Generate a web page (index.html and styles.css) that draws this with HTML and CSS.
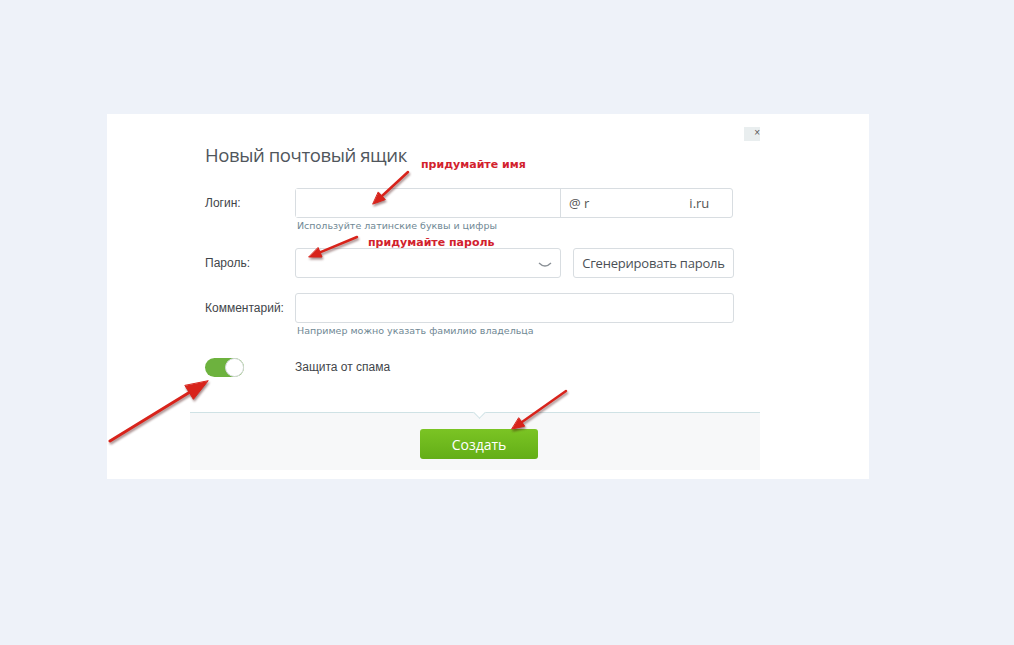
FILE: index.html
```html
<!DOCTYPE html>
<html lang="ru">
<head>
    <meta charset="UTF-8">
    <title>Новый почтовый ящик</title>
    <link rel="stylesheet" href="styles.css">
</head>
<body>
    <div class="panel">
        <div class="dialog">
            <div class="dialog-head">
                <h2>Новый почтовый ящик</h2>
                <span class="close">&times;</span>
            </div>

            <div class="form">
                <div class="row">
                    <label>Логин:</label>
                    <div class="field login">
                        <div class="input"></div>
                        <div class="domain">@ r<span class="domain-end">i.ru</span></div>
                    </div>
                </div>
                <p class="hint">Используйте латинские буквы и цифры</p>

                <div class="row row-pass">
                    <label>Пароль:</label>
                    <div class="input pass">
                        <svg class="eye" width="14" height="6" viewBox="0 0 14 6">
                            <path d="M1 1 Q7 7 13 1" fill="none" stroke="#8a9096" stroke-width="1.3"/>
                        </svg>
                    </div>
                    <button class="btn-gen">Сгенерировать пароль</button>
                </div>

                <div class="row row-comment">
                    <label>Комментарий:</label>
                    <div class="input comment"></div>
                </div>
                <p class="hint">Например можно указать фамилию владельца</p>

                <div class="row row-spam">
                    <label><span class="toggle"><span class="knob"></span></span></label>
                    <span class="spam-text">Защита от спама</span>
                </div>
            </div>

            <div class="dialog-foot">
                <span class="notch"></span>
                <button class="btn-create">Создать</button>
            </div>
        </div>
    </div>

    <!-- annotations drawn on top of the screenshot -->
    <span class="note note-name">придумайте имя</span>
    <span class="note note-pass">придумайте пароль</span>
    <svg class="arrows" width="1014" height="645" viewBox="0 0 1014 645">
        <g fill="#d8231b" stroke="#d8231b" stroke-linecap="round">
            <line x1="408" y1="172" x2="382" y2="196" stroke-width="2.5"/>
            <polygon points="373,204 385.3,199.6 378.5,192.2" stroke-width="1"/>
            <line x1="357" y1="237" x2="320" y2="252.4" stroke-width="2.5"/>
            <polygon points="309,257 322,257 318.2,247.8" stroke-width="1"/>
            <line x1="566" y1="391" x2="522" y2="422" stroke-width="2.5"/>
            <polygon points="512,429 524.7,426.2 518.9,418" stroke-width="1"/>
            <line x1="110" y1="441" x2="190" y2="392" stroke-width="3"/>
            <polygon points="208,381 193.4,399.3 185,385.7" stroke-width="1"/>
        </g>
    </svg>
</body>
</html>
```

FILE: styles.css
```css
:root {
    --page-bg: #eef2f9;
    --text: #4d5358;
    --hint: #6f8894;
    --border: #d8dde1;
    --green: #6cb91f;
    --red: #d2212d;
}

body {
    margin: 0;
    background-color: var(--page-bg);
    font-family: 'Liberation Sans', Arial, sans-serif;
    color: var(--text);
    width: 1014px;
    height: 645px;
    position: relative;
    overflow: hidden;
}

.panel {
    margin: 114px 0 0 107px;
    width: 762px;
    background: #ffffff;
    padding: 0 0 9px 83px;
    box-sizing: border-box;
}

.dialog {
    width: 570px;
}

.dialog-head {
    display: flex;
    justify-content: space-between;
    align-items: flex-start;
    padding: 13px 0 0 15px;
}

.dialog-head h2 {
    margin: 16px 0 0;
    font-family: 'Open Sans', Arial, sans-serif;
    font-weight: 400;
    font-size: 18.5px;
    line-height: 24px;
    color: #50565c;
    letter-spacing: -0.4px;
}

.close {
    width: 16px;
    height: 14px;
    background: #e9eeef;
    font-size: 10px;
    line-height: 12px;
    text-align: right;
    color: #555;
    box-sizing: border-box;
}

.form {
    padding: 21px 0 0 15px;
}

.row {
    display: flex;
    align-items: center;
}

.row label {
    width: 90px;
    flex-shrink: 0;
    font-size: 12px;
    color: #3f454a;
}

.input {
    height: 30px;
    border: 1px solid var(--border);
    border-radius: 3px;
    box-sizing: border-box;
    background: #fff;
}

.field.login {
    display: flex;
    width: 438px;
    height: 30px;
    border: 1px solid var(--border);
    border-radius: 3px;
    box-sizing: border-box;
}

.field.login .input {
    width: 265px;
    height: 28px;
    border: none;
    border-right: 1px solid var(--border);
    border-radius: 0;
}

.domain {
    flex: 1;
    display: flex;
    align-items: center;
    padding-left: 8px;
    font-family: 'Open Sans', Arial, sans-serif;
    font-size: 13px;
    color: #555;
}

.domain-end {
    margin-left: 100px;
}

.hint {
    margin: 2px 0 0 92px;
    font-family: 'DejaVu Sans', Verdana, sans-serif;
    font-size: 9.5px;
    line-height: 12px;
    color: var(--hint);
}

.row-pass {
    margin-top: 16px;
}

.input.pass {
    width: 266px;
    position: relative;
}

.eye {
    position: absolute;
    right: 8px;
    top: 13px;
}

.btn-gen {
    margin-left: 12px;
    width: 161px;
    height: 30px;
    border: 1px solid var(--border);
    border-radius: 3px;
    background: #fff;
    font-family: 'Open Sans', Arial, sans-serif;
    font-size: 13px;
    color: #4a5056;
    padding: 0;
    letter-spacing: -0.2px;
}

.row-comment {
    margin-top: 15px;
}

.input.comment {
    width: 439px;
}

.row-spam {
    margin-top: 20px;
    height: 20px;
}

.toggle {
    display: block;
    width: 39px;
    height: 19px;
    border-radius: 10px;
    background: #6db23e;
    position: relative;
}

.knob {
    position: absolute;
    right: 0;
    top: 0;
    width: 17px;
    height: 17px;
    border-radius: 50%;
    background: #fff;
    border: 1px solid #d6dadd;
}

.spam-text {
    font-size: 12px;
    color: #3f454a;
}

.dialog-foot {
    margin-top: 35px;
    border-top: 1px solid #cfe2e5;
    background: #f7f8f9;
    height: 58px;
    padding: 16px 0 0 230px;
    box-sizing: border-box;
    position: relative;
}

.notch {
    position: absolute;
    left: 285px;
    top: -5px;
    width: 8px;
    height: 8px;
    background: #fff;
    border-right: 1px solid #cfe2e5;
    border-bottom: 1px solid #cfe2e5;
    transform: rotate(45deg);
}

.btn-create {
    width: 118px;
    height: 30px;
    border: none;
    border-radius: 3px;
    background: linear-gradient(#7bc424, #63ae17);
    color: #fff;
    font-family: 'Open Sans', Arial, sans-serif;
    font-size: 14px;
    padding: 0;
}

.note {
    position: absolute;
    font-family: 'DejaVu Sans', Verdana, sans-serif;
    font-weight: bold;
    font-size: 11px;
    color: var(--red);
    white-space: nowrap;
}

.note-name {
    left: 421px;
    top: 158px;
}

.note-pass {
    left: 368px;
    top: 236px;
}

.arrows {
    position: absolute;
    left: 0;
    top: 0;
    pointer-events: none;
    filter: drop-shadow(1px 2px 1px rgba(60, 0, 0, 0.45));
}
```
